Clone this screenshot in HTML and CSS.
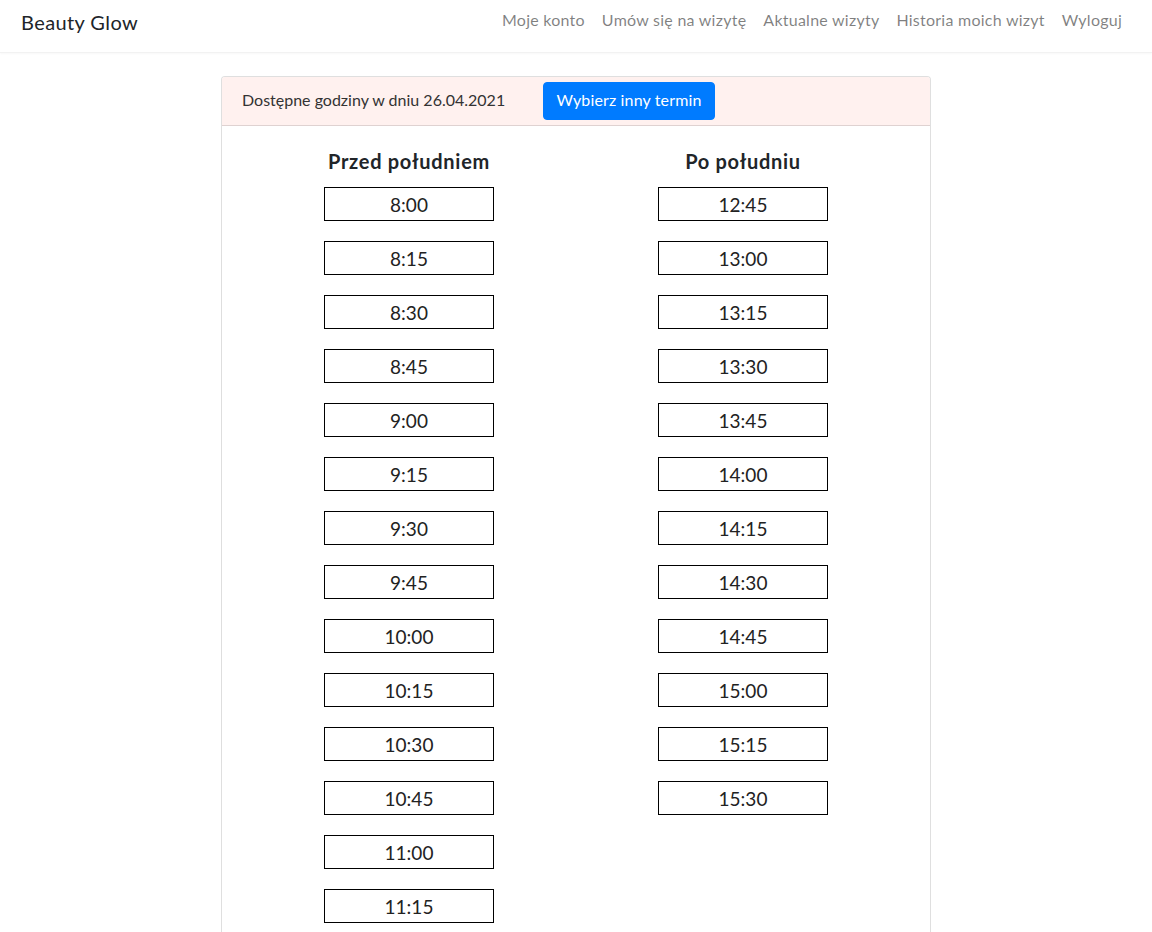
FILE: index.html
```html
<!DOCTYPE html>
<html lang="pl">
<head>
<meta charset="utf-8">
<title>Beauty Glow</title>
<link rel="stylesheet" href="styles.css">
</head>
<body>
<nav class="navbar">
  <a class="brand" href="#">Beauty Glow</a>
  <ul class="nav">
    <li><a href="#">Moje konto</a></li>
    <li><a href="#">Umów się na wizytę</a></li>
    <li><a href="#">Aktualne wizyty</a></li>
    <li><a href="#">Historia moich wizyt</a></li>
    <li><a href="#">Wyloguj</a></li>
  </ul>
</nav>
<main class="container">
  <div class="card">
    <div class="card-header">
      <span class="header-text">Dostępne godziny w dniu 26.04.2021</span>
      <button class="btn">Wybierz inny termin</button>
    </div>
    <div class="card-body">
      <div class="col">
        <h5>Przed południem</h5>
        <div class="slot">8:00</div>
        <div class="slot">8:15</div>
        <div class="slot">8:30</div>
        <div class="slot">8:45</div>
        <div class="slot">9:00</div>
        <div class="slot">9:15</div>
        <div class="slot">9:30</div>
        <div class="slot">9:45</div>
        <div class="slot">10:00</div>
        <div class="slot">10:15</div>
        <div class="slot">10:30</div>
        <div class="slot">10:45</div>
        <div class="slot">11:00</div>
        <div class="slot">11:15</div>
      </div>
      <div class="col">
        <h5>Po południu</h5>
        <div class="slot">12:45</div>
        <div class="slot">13:00</div>
        <div class="slot">13:15</div>
        <div class="slot">13:30</div>
        <div class="slot">13:45</div>
        <div class="slot">14:00</div>
        <div class="slot">14:15</div>
        <div class="slot">14:30</div>
        <div class="slot">14:45</div>
        <div class="slot">15:00</div>
        <div class="slot">15:15</div>
        <div class="slot">15:30</div>
      </div>
    </div>
  </div>
</main>
</body>
</html>
```
FILE: styles.css
```css
* { box-sizing: border-box; }
html, body { margin: 0; padding: 0; }
body {
  font-family: "Lato", "Open Sans", sans-serif;
  font-size: 16px;
  color: #212529;
  background: #fff;
}
.navbar {
  display: flex;
  align-items: center;
  justify-content: space-between;
  height: 53px;
  padding: 0 21px;
  border-bottom: 1px solid #f2f2f2;
  box-shadow: 0 1px 2px rgba(0,0,0,0.03);
}
.brand {
  font-size: 20px;
  letter-spacing: 0.4px;
  color: #212529;
  text-decoration: none;
  margin-top: -8px;
}
.nav {
  display: flex;
  list-style: none;
  margin: -14px 0 0;
  padding: 0;
  gap: 17px;
  margin-right: 9px;
}
.nav a {
  color: rgba(0,0,0,0.5);
  text-decoration: none;
  font-size: 16px;
  letter-spacing: 0.25px;
}
.container {
  width: 710px;
  margin: 23px auto 0;
}
.card {
  border: 1px solid rgba(0,0,0,0.125);
  border-radius: 4px;
  border-bottom: none;
}
.card-header {
  display: flex;
  align-items: center;
  background: #fff1ef;
  border-bottom: 1px solid rgba(0,0,0,0.125);
  padding: 5px 20px;
  height: 49px;
  border-radius: 3px 3px 0 0;
}
.header-text {
  width: 301px;
  font-size: 16px;
  color: #333;
  margin-top: -3px;
}
.btn {
  font-family: inherit;
  font-size: 16px;
  letter-spacing: 0.15px;
  color: #fff;
  background: #007bff;
  border: 1px solid #007bff;
  border-radius: 4px;
  height: 38px;
  width: 172px;
  padding: 0 0 3px;
  cursor: pointer;
}
.card-body {
  display: grid;
  grid-template-columns: 1fr 1fr;
  padding: 22px 20px 20px;
}
.col {
  display: flex;
  flex-direction: column;
  align-items: center;
}
.col h5 {
  margin: 0 0 13px;
  font-size: 20px;
  font-weight: 700;
  letter-spacing: 0.7px;
  line-height: 26px;
}
.slot {
  width: 170px;
  height: 34px;
  border: 1px solid #000;
  font-size: 19px;
  color: #222;
  display: flex;
  align-items: center;
  justify-content: center;
  margin-bottom: 20px;
}
```
